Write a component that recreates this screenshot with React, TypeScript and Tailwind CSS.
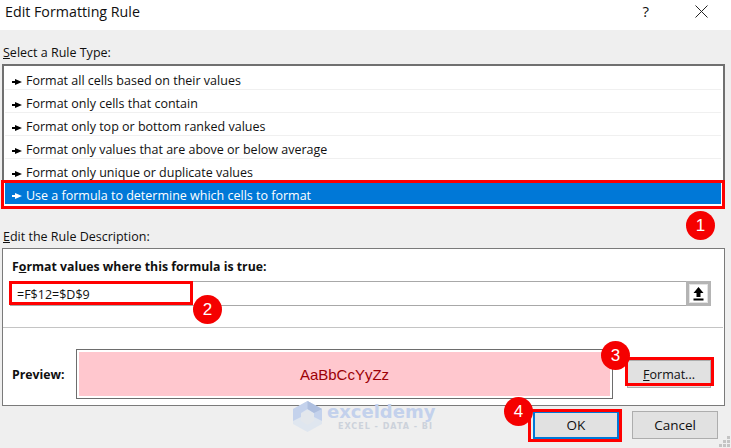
const rules = [
  'Format all cells based on their values',
  'Format only cells that contain',
  'Format only top or bottom ranked values',
  'Format only values that are above or below average',
  'Format only unique or duplicate values',
]

const Pointer = ({ light }: { light?: boolean }) => (
  <svg width="10" height="6" viewBox="0 0 10 6" className={light ? 'shrink-0 text-white' : 'shrink-0 text-black'}>
    <path d="M0 2h3V0l7 3-7 3V4H0z" fill="currentColor" />
  </svg>
)

const Badge = ({ n, className }: { n: number; className: string }) => (
  <div
    className={`absolute flex h-[29px] w-[29px] items-center justify-center rounded-full bg-[#f50000] text-[17px] text-white ${className}`}
    style={{ fontFamily: '"Liberation Sans", sans-serif' }}
  >
    {n}
  </div>
)

const Mark = ({ className }: { className: string }) => (
  <div className={`pointer-events-none absolute border-[3px] border-[#ff0000] ${className}`} />
)

const App = () => {
  return (
    <div
      className="relative h-[448px] w-[731px] overflow-hidden bg-[#efefef] text-[12.5px] text-[#101010]"
      style={{ fontFamily: '"Open Sans", "Noto Sans", sans-serif' }}
    >
      {/* title bar */}
      <div className="flex h-[30px] items-center bg-white pb-[7px] pl-[5px]">
        <span className="text-[14.25px]">Edit Formatting Rule</span>
        <span className="ml-auto mr-[46px] text-[15px]">?</span>
        <svg width="13" height="13" viewBox="0 0 13 13" className="mr-[23px]">
          <path d="M0.5 0.5l12 12M12.5 0.5l-12 12" stroke="#222" strokeWidth="1" />
        </svg>
      </div>

      {/* rule type */}
      <div className="pl-[3px] pt-[14px] leading-[18px]">
        <span className="underline">S</span>elect a Rule Type:
      </div>
      <div className="ml-[2px] mt-[2px] h-[145px] w-[723px] border-2 border-[#707070] bg-white pl-[1px] pr-[2px] pt-[1px]">
        {rules.map((r) => (
          <div key={r} className="flex h-[23px] items-center gap-[4px] border-b border-[#f0f0f0] pl-[7px] pt-[7px]">
            <Pointer />
            <span>{r}</span>
          </div>
        ))}
        <div className="mt-[1px] flex h-[21px] items-center gap-[4px] bg-[#0078d7] pl-[7px] pt-[5px] text-white">
          <Pointer light />
          <span>Use a formula to determine which cells to format</span>
        </div>
      </div>

      {/* rule description */}
      <div className="pl-[3px] pt-[19px] leading-[18px]">
        <span className="underline">E</span>dit the Rule Description:
      </div>
      <div className="ml-[2px] mt-[2px] h-[158px] w-[723px] border border-[#7a7a7a] bg-white">
        <div className="pl-[9px] pt-[9px] text-[12.3px] font-bold leading-[18px]">
          F<span className="underline">o</span>rmat values where this formula is true:
        </div>
        <div className="ml-[7px] mr-[13px] mt-[5px] flex h-[25px] items-center border-y border-[#a8a8a8]">
          <span className="pl-[7px] pt-[4px]">=F$12=$D$9</span>
          <div className="ml-auto flex h-[25px] w-[25px] items-center justify-center border-[3px] border-[#b4b4b4] bg-white outline outline-1 -outline-offset-4 outline-[#e4e4e4]">
            <svg width="11" height="14" viewBox="0 0 11 14">
              <path d="M5.5 0L10.5 6H7.5V10H3.5V6H0.5z M0.5 11.5h10V13.5h-10z" fill="#000" />
            </svg>
          </div>
        </div>
        <div className="mr-[1px] mt-[21px] border-t border-[#c4c4c4]" />
        <div className="mt-[21px] flex items-center">
          <span className="w-[73px] pl-[9px] pt-[2px] text-[12.3px] font-bold">Preview:</span>
          <div className="h-[50px] w-[537px] border border-[#6d6d6d] p-[2px]">
            <div
              className="flex h-full items-center justify-center bg-[#ffc7ce] pt-[2px] text-[15px] text-[#9c0006]"
              style={{ fontFamily: '"Liberation Sans", sans-serif' }}
            >
              AaBbCcYyZz
            </div>
          </div>
          <div className="ml-[14px] flex h-[28px] w-[84px] items-center justify-center border border-[#adadad] bg-[#e1e1e1] pt-[2px]">
            <span><span className="underline">F</span>ormat...</span>
          </div>
        </div>
      </div>

      {/* footer buttons */}
      <div className="mr-[13px] mt-[5px] flex justify-end gap-[13px] text-[13.5px]">
        <div className="flex h-[28px] w-[86px] items-center justify-center border-2 border-[#0078d7] bg-[#e1e1e1]">OK</div>
        <div className="flex h-[28px] w-[86px] items-center justify-center border border-[#adadad] bg-[#e1e1e1]">Cancel</div>
      </div>

      {/* size grip */}
      <svg width="12" height="12" viewBox="0 0 12 12" className="absolute bottom-0 right-0" fill="#c4c4c4">
        <rect x="8" y="0" width="3" height="3" />
        <rect x="4" y="4" width="3" height="3" />
        <rect x="8" y="4" width="3" height="3" />
        <rect x="0" y="8" width="3" height="3" />
        <rect x="4" y="8" width="3" height="3" />
        <rect x="8" y="8" width="3" height="3" />
      </svg>

      {/* watermark */}
      <div className="absolute left-[293px] top-[401px] flex h-[31px] w-[144px] items-center">
        <svg width="29" height="31" viewBox="0 0 29 31" className="shrink-0">
          <path d="M14.5 0L29 8V23L14.5 31 0 23V8z" fill="#dfe6ef" />
          <path d="M14.5 0L29 8V20L21 16V12L14.5 8 8 12V16L0 20V8z" fill="#c4d2ec" />
          <path d="M14.5 9L21 13V20L14.5 24 8 20V13z" fill="#e3e7ec" />
          <path d="M14.5 0L29 8 21 12 14.5 8z" fill="#aebfdf" />
        </svg>
        <div className="ml-[5px] flex flex-col" style={{ fontFamily: '"DejaVu Sans", sans-serif' }}>
          <span className="text-[18px] font-bold leading-[20px] text-[#c3d1ec]">exceldemy</span>
          <span className="whitespace-nowrap pl-[11px] text-[8px] font-bold leading-[9px] tracking-[1px] text-[#ccd2db]">EXCEL - DATA - BI</span>
        </div>
      </div>

      {/* annotations */}
      <Mark className="left-[1px] top-[180px] h-[29px] w-[724px]" />
      <Mark className="left-[9px] top-[281px] h-[24px] w-[184px]" />
      <Mark className="left-[625px] top-[357px] h-[29px] w-[89px]" />
      <Mark className="left-[528px] top-[409px] h-[33px] w-[94px]" />
      <Badge n={1} className="left-[686px] top-[211px]" />
      <Badge n={2} className="left-[193px] top-[295px]" />
      <Badge n={3} className="left-[601px] top-[341px]" />
      <Badge n={4} className="left-[504px] top-[397px]" />
    </div>
  )
}

export default App
